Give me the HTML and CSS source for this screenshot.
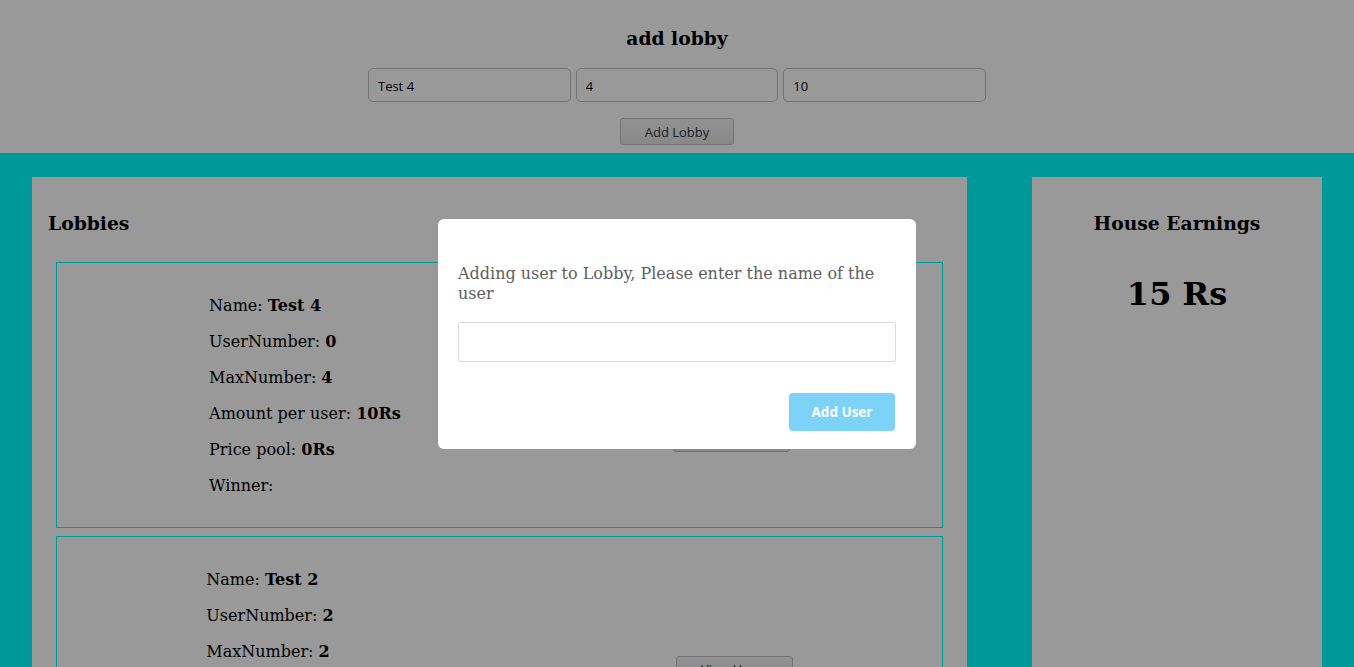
FILE: index.html
```html
<!DOCTYPE html>
<html lang="en">
<head>
<meta charset="utf-8">
<title>Lobbies</title>
<link rel="stylesheet" href="styles.css">
</head>
<body>
  <header class="top">
    <h3 class="top-title">add lobby</h3>
    <div class="lobby-form">
      <input class="field" type="text" value="Test 4">
      <input class="field" type="text" value="4">
      <input class="field" type="text" value="10">
    </div>
    <button class="btn btn-add-lobby">Add Lobby</button>
  </header>

  <main class="board">
    <section class="panel lobbies">
      <h3 class="panel-title">Lobbies</h3>
      <div class="lobby-list">
        <article class="lobby-card">
          <div class="lobby-info">
            <p>Name: <b>Test 4</b></p>
            <p>UserNumber: <b>0</b></p>
            <p>MaxNumber: <b>4</b></p>
            <p>Amount per user: <b>10Rs</b></p>
            <p>Price pool: <b>0Rs</b></p>
            <p>Winner: </p>
          </div>
          <div class="lobby-actions">
            <button class="btn btn-card">Add User</button>
            <button class="btn btn-card">Start Game</button>
            <button class="btn btn-card">View Users</button>
          </div>
        </article>
        <article class="lobby-card">
          <div class="lobby-info">
            <p>Name: <b>Test 2</b></p>
            <p>UserNumber: <b>2</b></p>
            <p>MaxNumber: <b>2</b></p>
            <p>Amount per user: <b>150Rs</b></p>
            <p>Price pool: <b>300Rs</b></p>
            <p>Winner: <b>Rahul</b></p>
          </div>
          <div class="lobby-actions">
            <button class="btn btn-card">View Users</button>
          </div>
        </article>
      </div>
    </section>

    <aside class="panel earnings">
      <h3 class="panel-title earnings-title">House Earnings</h3>
      <h1 class="earnings-value">15 Rs</h1>
    </aside>
  </main>

  <div class="overlay"></div>
  <div class="modal" role="dialog">
    <p class="modal-text">Adding user to Lobby, Please enter the name of the user</p>
    <input class="modal-input" type="text">
    <div class="modal-footer">
      <button class="modal-btn">Add User</button>
    </div>
  </div>
</body>
</html>
```

FILE: styles.css
```css
* { box-sizing: border-box; }

html, body {
  margin: 0;
  padding: 0;
}

body {
  font-family: "DejaVu Serif", serif;
  color: #000;
  background: #ffffff;
  height: 667px;
  overflow: hidden;
}

/* ---------- top form ---------- */
.top {
  display: flex;
  flex-direction: column;
  align-items: center;
  padding: 27px 0 8px;
  background: #ffffff;
}

.top-title {
  margin: 0 0 19px;
  font-size: 18.72px;
  line-height: 22px;
  font-weight: bold;
}

.lobby-form {
  display: flex;
  gap: 5px;
}

.field {
  width: 202.7px;
  height: 34px;
  padding: 1px 9px 0;
  border: 1px solid #c2c2c2;
  border-radius: 5px;
  background: #fff;
  font-family: "Open Sans", sans-serif;
  font-size: 13px;
  color: #000;
}

.btn {
  height: 27px;
  border: 1px solid #c0c0c0;
  border-radius: 3px;
  background: linear-gradient(#f3f3f3, #e3e3e3);
  font-family: "Open Sans", sans-serif;
  font-size: 13px;
  color: #2e3436;
  padding: 0;
}

.btn-add-lobby {
  margin-top: 16px;
  width: 114px;
}

/* ---------- board ---------- */
.board {
  display: flex;
  gap: 65px;
  padding: 24px 32px;
  background: #00ffff;
  min-height: 514px;
}

.panel {
  background: #ffffff;
  padding: 16px;
}

.lobbies {
  flex: 1;
}

.earnings {
  width: 290px;
  text-align: center;
}

.panel-title {
  margin: 19px 0 0;
  font-size: 18.72px;
  line-height: 22px;
  font-weight: bold;
}

.lobby-list {
  margin-top: 28px;
  padding: 0 8px;
}

.lobby-card {
  display: flex;
  justify-content: space-around;
  align-items: center;
  border: 1px solid #00ffff;
  padding: 17px 16px 15px;
  margin-bottom: 8px;
}

.lobby-info p {
  margin: 16px 0;
  font-size: 16px;
  line-height: 20px;
}

.lobby-actions {
  display: flex;
  flex-direction: column;
  gap: 16px;
  margin-top: -2px;
}

.btn-card {
  width: 117px;
}

.earnings-value {
  margin: 41px 0 0;
  font-size: 32px;
  line-height: 38px;
  font-weight: bold;
}

/* ---------- modal ---------- */
.overlay {
  position: fixed;
  inset: 0;
  background: rgba(0, 0, 0, 0.4);
}

.modal {
  position: fixed;
  top: 219px;
  left: 50%;
  width: 478px;
  margin-left: -239px;
  background: #fff;
  border-radius: 6px;
  padding: 45px 20px 18px;
}

.modal-text {
  margin: 0;
  font-size: 16px;
  line-height: 20px;
  color: #5e5e5e;
}

.modal-input {
  display: block;
  width: 100%;
  height: 40px;
  margin-top: 18px;
  border: 1px solid #d9d9d9;
  border-radius: 2px;
  background: #fff;
}

.modal-footer {
  display: flex;
  justify-content: flex-end;
  margin-top: 31px;
}

.modal-btn {
  width: 106px;
  height: 38px;
  margin-right: 1px;
  border: none;
  border-radius: 4px;
  background: #7dd2f8;
  color: #fff;
  font-family: "Open Sans", sans-serif;
  font-weight: 700;
  font-size: 13.5px;
  padding: 0;
}
```
